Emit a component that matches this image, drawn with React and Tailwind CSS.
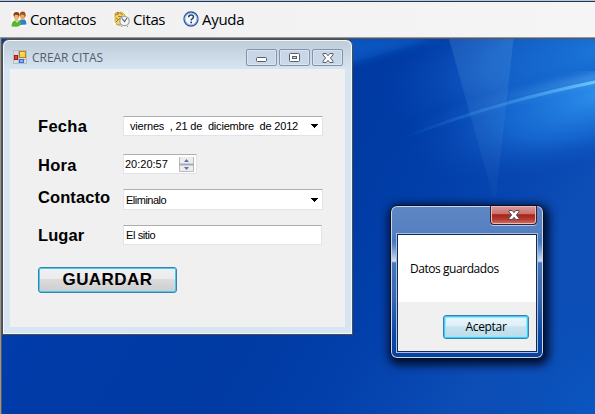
function ContactsIcon() {
  return (
    <svg width="16" height="16" viewBox="0 0 16 16" className="block shrink-0">
      <rect width="16" height="16" fill="#fafafa" />
      <path d="M8.5 14V9.5q2-2 5-1 2 1 2 5z" fill="#2f7fd6" />
      <path d="M9 3q2.500-3 5 0l.5 3-2 3h-2L9 6z" fill="#e9a766" />
      <path d="M8.700 4q.3-3.500 3-3.400 3.200 0 3 4.400l-1 1-.6-2-3-.5-1 1.500z" fill="#a14f17" />
      <path d="M.5 15.500q0-4.500 3-6h4q3 1 2.700 4-2 2.300-5 2.200z" fill="#52b82e" />
      <path d="M4 9.500l2 2.500 2-2.500z" fill="#c8f09a" />
      <path d="M3 4q2.500-3 5 0v3L6.500 9.500h-2L3 7z" fill="#f0b274" />
      <path d="M2.500 5Q2 1 5.500 1T8.500 5l-.8 1-.7-2-3-.2-.9 2z" fill="#8c3d12" />
    </svg>
  );
}

function AppointmentsIcon() {
  return (
    <svg width="17" height="16" viewBox="0 0 17 16" className="block shrink-0">
      <rect width="15" height="14" fill="#fbf8ee" />
      <path d="M2 2l7-1 3 3v8l-7 2-3-3z" fill="#efd765" stroke="#b89a36" strokeWidth=".7" />
      <path d="M2 4l3-1M7 2l3 2M3 7l3 2M3 11l4-4M5 5l3 1" stroke="#a2792f" strokeWidth="1" />
      <path d="M4 1l2 2M8 5l1 2" stroke="#d55b32" strokeWidth="1.300" />
      <path d="M3 13q3 2 5 1" stroke="#b9a56b" fill="none" />
      <circle cx="11.500" cy="10" r="4.700" fill="#f3f5f6" stroke="#a6a7aa" strokeWidth="1.300" />
      <path d="M9 7.500l2.500 3L14 7" fill="none" stroke="#555b66" strokeWidth="1.100" />
      <path d="M9 15l-1 1M14 15l1 1" stroke="#999" />
    </svg>
  );
}

function HelpIcon() {
  return (
    <svg width="16" height="16" viewBox="0 0 16 16" className="block shrink-0">
      <circle cx="8" cy="8" r="7" fill="#f7faff" stroke="#2d569c" strokeWidth="1.300" />
      <circle cx="8" cy="8" r="5.800" fill="none" stroke="#9dbde5" strokeWidth="1" />
      <path d="M5.700 6.200q0-2.200 2.400-2.200t2.300 2q0 1.200-1.300 1.900-.9.500-.9 1.500" fill="none" stroke="#28406f" strokeWidth="1.600" />
      <rect x="7.300" y="10.600" width="1.700" height="1.700" fill="#28406f" />
    </svg>
  );
}

function FormIcon() {
  return (
    <svg width="14" height="14" viewBox="0 0 14 14" className="block shrink-0">
      <rect x=".5" y=".5" width="13" height="13" fill="#d6dce3" stroke="#b7bdc5" />
      <path d="M5.500 0v14M0 5.500h6M0 9.500h14" stroke="#b4bac3" />
      <rect x="6.500" y="1.500" width="6" height="6" fill="#f8cf45" stroke="#bd8412" />
      <path d="M7.500 3h3" stroke="#fff0a0" />
      <rect x="1.500" y="5.500" width="3" height="4" fill="#e04435" stroke="#a91814" />
      <rect x="6.500" y="9.500" width="4" height="3" fill="#7db2f4" stroke="#3a6fd0" />
    </svg>
  );
}

function Wallpaper() {
  return (
    <svg width="593" height="375" viewBox="2 39 593 375" className="absolute inset-0 block">
      <defs>
        <linearGradient id="base" x1="0" y1="0" x2="1" y2=".35">
          <stop offset="0" stopColor="#003db0" />
          <stop offset=".6" stopColor="#003aa2" />
          <stop offset=".8" stopColor="#0340ab" />
          <stop offset="1" stopColor="#0c4db6" />
        </linearGradient>
        <radialGradient id="sky" gradientUnits="userSpaceOnUse" cx="0" cy="0" r="1" gradientTransform="translate(600 50) rotate(-12) scale(230 80)">
          <stop offset="0" stopColor="#1b76d8" />
          <stop offset=".5" stopColor="#1463cb" stopOpacity=".85" />
          <stop offset="1" stopColor="#0440b4" stopOpacity="0" />
        </radialGradient>
        <radialGradient id="under" gradientUnits="userSpaceOnUse" cx="0" cy="0" r="1" gradientTransform="translate(605 92) rotate(-18) scale(205 72)">
          <stop offset="0" stopColor="#2d91ee" />
          <stop offset=".5" stopColor="#176bd3" stopOpacity=".85" />
          <stop offset="1" stopColor="#0742b2" stopOpacity="0" />
        </radialGradient>
        <radialGradient id="corner" gradientUnits="userSpaceOnUse" cx="610" cy="415" r="130">
          <stop offset="0" stopColor="#0a58c4" />
          <stop offset="1" stopColor="#0a50b8" stopOpacity="0" />
        </radialGradient>
        <linearGradient id="streak" gradientUnits="userSpaceOnUse" x1="400" y1="0" x2="595" y2="0">
          <stop offset="0" stopColor="#1a66cf" stopOpacity="0" />
          <stop offset=".5" stopColor="#2d87e2" stopOpacity=".7" />
          <stop offset="1" stopColor="#6cc4ff" />
        </linearGradient>
        <linearGradient id="beam" x1="0" y1="0" x2="0" y2="1">
          <stop offset="0" stopColor="#74b1e6" stopOpacity=".2" />
          <stop offset="1" stopColor="#5c98d8" stopOpacity=".06" />
        </linearGradient>
        <filter id="soft"><feGaussianBlur stdDeviation="4" /></filter>
        <filter id="fine"><feGaussianBlur stdDeviation=".7" /></filter>
      </defs>
      <rect x="2" y="39" width="593" height="375" fill="url(#base)" />
      <path d="M345 65Q400 49 450 35H345z" fill="#0a5bc8" opacity=".8" filter="url(#soft)" />
      <rect x="300" y="39" width="295" height="110" fill="url(#sky)" />
      <path d="M400 139Q490 103 595 82V220H400z" fill="url(#under)" />
      <path d="M400 135Q490 99 600 77" stroke="url(#streak)" strokeWidth="8" opacity=".6" fill="none" filter="url(#soft)" />
      <path d="M400 139Q490 103 600 81" stroke="url(#streak)" strokeWidth="3" fill="none" filter="url(#fine)" />
      <path d="M449 39H513.500L496 196H493z" fill="url(#beam)" />
      <rect x="450" y="280" width="145" height="134" fill="url(#corner)" />
    </svg>
  );
}

const captionButton =
  "flex h-[17px] w-[31px] items-center justify-center rounded-[2px] border border-[#8592ac] bg-linear-to-b from-[#c8d6e5] to-[#c9d9ea] shadow-[inset_0_0_0_1px_#d9e4f0]";
const field = "border border-[#e2e3ea] border-t-[#abadb3] bg-white rounded-[1px] text-[11px] leading-[18px] whitespace-pre";
const label = "w-[85px] shrink-0 text-[16.5px] leading-5 font-bold whitespace-nowrap";

function CloseGlyph({ stroke }) {
  return (
    <svg width="12" height="10" viewBox="0 0 12 10" className="block">
      <path d="M1 .5h3.200L6 2.700 7.800.5H11v1.300L8.400 5 11 8.200v1.300H7.800L6 7.300 4.200 9.500H1V8.200L3.600 5 1 1.800z" fill="#fff" stroke={stroke} />
    </svg>
  );
}

function DropArrow() {
  return (
    <svg width="7" height="4" viewBox="0 0 7 4" className="block">
      <path d="M0 0h7v1H6v1H5v1H4v1H3V3H2V2H1V1H0z" fill="#000" />
    </svg>
  );
}

function CreateWindow() {
  return (
    <div className="absolute top-0 left-0 flex h-[296px] w-[351px] flex-col rounded-t-[7px] border border-[#4b4d4f] bg-[#d7e4f2] font-['Liberation_Sans',Arial,sans-serif] text-black shadow-[inset_0_0_0_1px_#f4f8fb]">
      <div className="mx-px mt-px flex h-7 shrink-0 items-start rounded-t-[6px] bg-linear-to-b from-[#bfcddb] to-[#d7e4f2] pt-2 pr-2 pl-[9px]">
        <div className="mt-px"><FormIcon /></div>
        <span className="ml-[5px] grow font-['Open_Sans','Noto_Sans',sans-serif] text-[12px] leading-[17px] tracking-[-0.03px] text-[#545d68]">CREAR CITAS</span>
        <div className="flex gap-[2px]">
          <div className={captionButton}>
            <svg width="12" height="6" viewBox="0 0 12 6" className="mt-1 block"><rect x=".5" y=".5" width="10" height="4" rx="1" fill="#fff" stroke="#555c6a" /></svg>
          </div>
          <div className={captionButton}>
            <svg width="11" height="9" viewBox="0 0 11 9" className="block"><rect x=".5" y=".5" width="10" height="8" rx="1" fill="#fff" stroke="#555c6a" /><rect x="3.500" y="3.500" width="4" height="2" fill="#c8d6e5" stroke="#555c6a" /></svg>
          </div>
          <div className={captionButton}><CloseGlyph stroke="#555c6a" /></div>
        </div>
      </div>
      <div className="mr-[7px] mb-[7px] ml-[7px] flex grow flex-col bg-[#f0f0f0] pt-[47px] pl-7">
        <div className="flex items-start">
          <div className={`${label} tracking-[0.3px]`}>Fecha</div>
          <div className={`${field} flex h-5 w-[200px] items-center justify-between pr-1 pl-[6px]`}>
            <span className="tracking-[-0.19px]">viernes  , 21 de  diciembre  de 2012</span>
            <DropArrow />
          </div>
        </div>
        <div className="mt-[18px] flex h-5 items-start">
          <div className={`${label} pt-px tracking-[0.3px]`}>Hora</div>
          <div className={`${field} flex h-5 w-[74px] justify-between pr-[2px] pl-px`}>
            <span>20:20:57</span>
            <svg width="15" height="15" viewBox="0 0 15 15" className="mt-[2px] block">
              <path d="M.5 0v14.500h14V0" fill="#ededee" stroke="#b9babe" />
              <path d="M0 7.500h15" stroke="#a9aaae" strokeWidth="2" />
              <path d="M7.500 2L10 5H5zM7.500 13L5 10h5z" fill="#5b70bb" />
            </svg>
          </div>
        </div>
        <div className="mt-[15px] flex h-[21px] items-start">
          <div className={`${label} -mt-[2px] tracking-[0.1px]`}>Contacto</div>
          <div className={`${field} flex h-[21px] w-[200px] items-center justify-between pr-1 pl-[2px]`}>
            <span className="tracking-[-0.5px]">Eliminalo</span>
            <DropArrow />
          </div>
        </div>
        <div className="mt-[15px] flex items-start">
          <div className={`${label} tracking-[0.1px]`}>Lugar</div>
          <div className={`${field} h-5 w-[199px] pl-[2px] tracking-[-0.4px]`}>El sitio</div>
        </div>
        <button className="mt-[22px] h-[26px] w-[139px] rounded-[3px] border border-[#3c7fb1] bg-[linear-gradient(#f1f1f1_0%,#ebebeb_46%,#dcdcdc_47%,#cdcdcd_100%)] text-[17px] leading-6 font-bold tracking-[0.45px] shadow-[inset_0_0_0_1px_#48cbf0]">GUARDAR</button>
      </div>
    </div>
  );
}

function MessageDialog() {
  return (
    <div className="absolute top-[166px] left-[388px] h-[154px] w-[154px] rounded-[7px] border border-[#061021] bg-[linear-gradient(#5f87c4_0px,#5580c0_26px,#4478bf_35px,#5d88c7_40px,#d0def1_55px,#4477bb_57px,#3868b2_90px,#0a47a4_130px,#0742a0_150px)] font-['Open_Sans','Noto_Sans',sans-serif] text-[12px] text-black shadow-[inset_0_0_0_1px_#c5d7ee,2px_3px_10px_3px_rgba(0,0,20,0.85)]">
      <div className="flex h-7 justify-end pr-[6px]">
        <div className="flex h-[19px] w-[47px] items-center justify-center rounded-b-[4px] border border-t-0 border-[#34203a] bg-[linear-gradient(#d99a9c_0%,#c8706d_45%,#a92218_48%,#b53e31_75%,#cc756a_100%)] pb-px shadow-[inset_0_0_0_1px_#edb9b9,0_1px_0_#b8caeb]">
          <CloseGlyph stroke="#514d5c" />
        </div>
      </div>
      <div className="mr-[6px] ml-[6px] flex h-[118px] flex-col border border-[#122b54] bg-[#f0f0f0] shadow-[0_0_0_1px_#a8bddf]">
        <div className="h-[67px] bg-white pt-[25px] pl-3 leading-[18px] tracking-[-0.45px] whitespace-nowrap">Datos guardados</div>
        <button className="mt-[13px] mr-[7px] h-6 w-[86px] self-end rounded-[3px] border border-[#3c7fb1] bg-[linear-gradient(#eaf5fb_0%,#deeff8_47%,#c7e4f0_48%,#b9dcea_100%)] leading-[22px] tracking-[-0.3px] shadow-[inset_0_0_0_1px_#34d2fa,inset_0_0_0_2px_#a0e5f7]">Aceptar</button>
      </div>
    </div>
  );
}

export default function App() {
  return (
    <div className="flex h-[414px] w-[595px] flex-col overflow-hidden bg-[#f0f0f0]">
      <nav className="flex h-[37px] shrink-0 items-center border-t border-[#b5c9df] bg-linear-to-r from-[#f0f0f0] to-[#f5f5f5] pl-[11px] font-['Open_Sans','Noto_Sans',sans-serif] text-[15px] leading-5 text-black shadow-[inset_0_1px_0_#24344c]">
        <div className="flex w-[102px] items-center gap-[3px]"><ContactsIcon /><span className="tracking-[-0.45px]">Contactos</span></div>
        <div className="flex w-[70px] items-center gap-[3px]"><AppointmentsIcon /><span className="tracking-[-0.4px]">Citas</span></div>
        <div className="flex items-center gap-[3px]"><HelpIcon /><span className="tracking-[-0.3px]">Ayuda</span></div>
      </nav>
      <main className="flex grow flex-col border-t border-l border-[#979797]">
        <div className="relative grow overflow-hidden border-t border-l border-[#555759]">
          <Wallpaper />
          <CreateWindow />
          <MessageDialog />
        </div>
      </main>
    </div>
  );
}
